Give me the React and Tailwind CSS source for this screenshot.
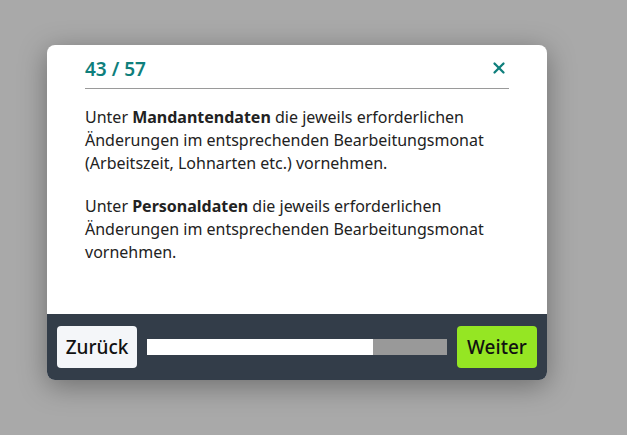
import { X } from 'lucide-react';

// Tour step dialog with progress footer
const step = 43;
const total = 57;

export default function App() {
  const pct = (step / total) * 100;

  return (
    <div
      className="min-h-[435px] w-full bg-[#a9a9a9] pt-[45px] pl-[47px]"
      style={{ fontFamily: '"Noto Sans", "Open Sans", sans-serif' }}
    >
      <div className="w-[500px] overflow-hidden rounded-lg bg-white shadow-[0_6px_28px_rgba(0,0,0,0.35)]">
        <div className="px-[38px] pt-[12px]">
          <div className="flex items-center justify-between border-b border-[#9a9a9a] pb-[6px]">
            <span className="text-[19px] font-semibold leading-[25px] text-[#0f7f7c]">
              {step} / {total}
            </span>
            <button className="-mt-[4px] mr-[1px] text-[#0f7f7c]">
              <X className="h-[18px] w-[18px]" strokeWidth={3} />
            </button>
          </div>
          <div className="pt-[17px] pb-[50px] text-[16px] leading-[23px] text-[#222]">
            <p>
              Unter <b>Mandantendaten</b> die jeweils erforderlichen Änderungen im
              entsprechenden Bearbeitungsmonat (Arbeitszeit, Lohnarten etc.)
              vornehmen.
            </p>
            <p className="mt-[20px]">
              Unter <b>Personaldaten</b> die jeweils erforderlichen Änderungen im
              entsprechenden Bearbeitungsmonat vornehmen.
            </p>
          </div>
        </div>
        <div className="flex items-center gap-[10px] bg-[#333d49] px-[10px] py-[12px]">
          <button className="h-[42px] w-[80px] rounded-[4px] bg-[#f4f6f9] text-[19px] font-medium text-[#111]">
            Zurück
          </button>
          <div className="h-[16px] flex-1 bg-[#999]">
            <div className="h-full bg-white" style={{ width: `${pct}%` }} />
          </div>
          <button className="h-[42px] w-[80px] rounded-[4px] bg-[#95e623] text-[19px] font-medium text-[#111]">
            Weiter
          </button>
        </div>
      </div>
    </div>
  );
}
